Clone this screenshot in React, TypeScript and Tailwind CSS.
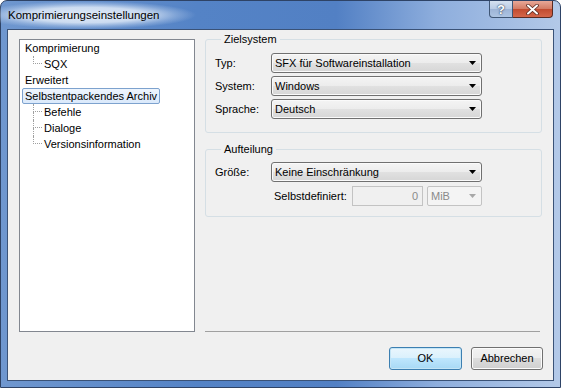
import React from "react";

type TreeItem = {
  label: string;
  level: 0 | 1;
  last?: boolean;
  selected?: boolean;
};

const tree: TreeItem[] = [
  { label: "Komprimierung", level: 0 },
  { label: "SQX", level: 1, last: true },
  { label: "Erweitert", level: 0 },
  { label: "Selbstentpackendes Archiv", level: 0, selected: true },
  { label: "Befehle", level: 1 },
  { label: "Dialoge", level: 1 },
  { label: "Versionsinformation", level: 1, last: true },
];

const Arrow = ({ color = "#000" }: { color?: string }) => (
  <svg width="7" height="4" viewBox="0 0 7 4">
    <polygon points="0,0 7,0 3.5,4" fill={color} />
  </svg>
);

const Combo = ({ value }: { value: string }) => (
  <div className="flex h-[20px] w-[211px] items-center justify-between rounded-[3px] border border-[#707070] bg-[linear-gradient(#f4f4f4,#ececec_50%,#e1e1e1_50%,#d6d6d6)] pl-[3px] pr-[5px] shadow-[inset_0_0_0_1px_#fafafa]">
    <span>{value}</span>
    <Arrow />
  </div>
);

const TreeRow = ({ item }: { item: TreeItem }) => {
  if (item.level === 0) {
    return (
      <div className="flex h-[16px] items-center pl-[2px]">
        <span
          className={
            item.selected
              ? "flex h-[16px] items-center rounded-[2px] border border-[#7da2ce] bg-[linear-gradient(#eef5fd,#dae9fb)] px-[2px]"
              : "flex h-[16px] items-center border border-transparent px-[2px]"
          }
        >
          {item.label}
        </span>
      </div>
    );
  }
  return (
    <div className="flex h-[16px] items-center">
      <div className="ml-[13px] flex h-full w-[9px] flex-col">
        <div className="h-[8px] border-b border-l border-dotted border-[#a0a0a0]" />
        <div
          className={
            item.last ? "flex-1" : "flex-1 border-l border-dotted border-[#a0a0a0]"
          }
        />
      </div>
      <span className="ml-[2px]">{item.label}</span>
    </div>
  );
};

const Button = ({ label, isDefault }: { label: string; isDefault?: boolean }) => (
  <div
    className={
      isDefault
        ? "flex h-[23px] w-[73px] items-center justify-center rounded-[3px] border border-[#3c7fb1] bg-[linear-gradient(#eaf6fd,#d9f0fc_50%,#bee6fd_50%,#a7d9f5)] shadow-[inset_0_0_0_1px_#c4e5f6]"
        : "flex h-[23px] w-[72px] items-center justify-center rounded-[3px] border border-[#707070] bg-[linear-gradient(#f2f2f2,#ebebeb_50%,#dddddd_50%,#cfcfcf)] shadow-[inset_0_0_0_1px_#fcfcfc]"
    }
  >
    {label}
  </div>
);

export default function App() {
  return (
    <div className="h-[388px] w-[561px] overflow-hidden bg-white font-['Liberation_Sans',Arial,sans-serif] text-[11px] leading-[13px] text-black">
      <div className="flex h-[388px] w-[561px] flex-col rounded-t-[7px] border border-[#2e4366] bg-[linear-gradient(to_right,#6f97cf_0%,#5483c6_35%,#5280c4_60%,#8eaedd_78%,#b3c9e8_100%)]">
        {/* title bar */}
        <div className="flex h-[28px] items-start justify-between">
          <div className="ml-[-24px] flex h-[28px] items-center bg-[radial-gradient(closest-side,rgba(232,240,250,0.95)_0%,rgba(222,233,247,0.85)_55%,rgba(200,218,242,0.35)_82%,rgba(200,218,242,0)_100%)] pl-[31px] pr-[36px] pt-[1px] text-[11.5px]">
            Komprimierungseinstellungen
          </div>
          <div className="mr-[7px] flex">
            <div className="flex h-[17px] w-[24px] items-center justify-center rounded-bl-[4px] border border-t-0 border-[#3f5675] bg-[linear-gradient(#d5e1f0,#b8cbe5_50%,#9db4d6_50%,#adc4e2)] text-[13px] font-bold text-white [text-shadow:0_0_2px_#2c3e5c,0_0_1px_#2c3e5c]">
              ?
            </div>
            <div className="flex h-[17px] w-[40px] items-center justify-center rounded-br-[4px] border border-l-0 border-t-0 border-[#5a2a22] bg-[linear-gradient(#e8a898,#d37a63_50%,#c14a2f_50%,#d5664a)]">
              <svg width="13" height="11" viewBox="0 0 13 11">
                <path d="M2 1.5 L11 9.5 M11 1.5 L2 9.5" stroke="#5a2a22" strokeWidth="3.6" strokeLinecap="round" />
                <path d="M2 1.5 L11 9.5 M11 1.5 L2 9.5" stroke="#fff" strokeWidth="2" strokeLinecap="round" />
              </svg>
            </div>
          </div>
        </div>

        {/* client area */}
        <div className="ml-[6px] h-[352px] w-[547px] border border-[#3a5277] bg-[#f0f0f0]">
          <div className="flex gap-[10px] pl-[11px] pt-[3px]">
            <div className="mt-[6px] h-[293px] w-[176px] border border-[#828790] bg-white">
              {tree.map((item) => (
                <TreeRow key={item.label} item={item} />
              ))}
            </div>

            <div className="flex h-[299px] w-[337px] flex-col">
              <fieldset className="rounded-[3px] border border-[#d5dfe5] pb-[13px] pl-[9px]">
                <legend className="ml-[6px] px-[3px] leading-[13px]">Zielsystem</legend>
                <div className="flex flex-col gap-[3px] pt-[7px]">
                  <div className="flex items-center">
                    <span className="w-[56px]">Typ:</span>
                    <Combo value="SFX für Softwareinstallation" />
                  </div>
                  <div className="flex items-center">
                    <span className="w-[56px]">System:</span>
                    <Combo value="Windows" />
                  </div>
                  <div className="flex items-center">
                    <span className="w-[56px]">Sprache:</span>
                    <Combo value="Deutsch" />
                  </div>
                </div>
              </fieldset>

              <fieldset className="mt-[10px] rounded-[3px] border border-[#d5dfe5] pb-[10px] pl-[9px]">
                <legend className="ml-[6px] px-[3px] leading-[13px]">Aufteilung</legend>
                <div className="flex flex-col gap-[4px] pt-[6px]">
                  <div className="flex items-center">
                    <span className="w-[56px]">Größe:</span>
                    <Combo value="Keine Einschränkung" />
                  </div>
                  <div className="ml-[56px] flex items-center">
                    <span className="w-[81px] pl-[3px]">Selbstdefiniert:</span>
                    <div className="flex h-[20px] w-[71px] items-center justify-end border border-[#c3c3c3] bg-[#f0f0f0] pr-[4px] text-[#8a8a8a]">
                      0
                    </div>
                    <div className="ml-[4px] flex h-[20px] w-[55px] items-center justify-between rounded-[2px] border border-[#c3c3c3] bg-[#f4f4f4] pl-[3px] pr-[5px] text-[#8a8a8a]">
                      <span>MiB</span>
                      <Arrow color="#a8a8a8" />
                    </div>
                  </div>
                </div>
              </fieldset>

              <div className="mt-auto h-px w-[335px] bg-[#a0a0a0]" />
            </div>
          </div>

          <div className="mt-[15px] flex justify-end gap-[9px] pr-[10px]">
            <Button label="OK" isDefault />
            <Button label="Abbrechen" />
          </div>
        </div>
      </div>
    </div>
  );
}
